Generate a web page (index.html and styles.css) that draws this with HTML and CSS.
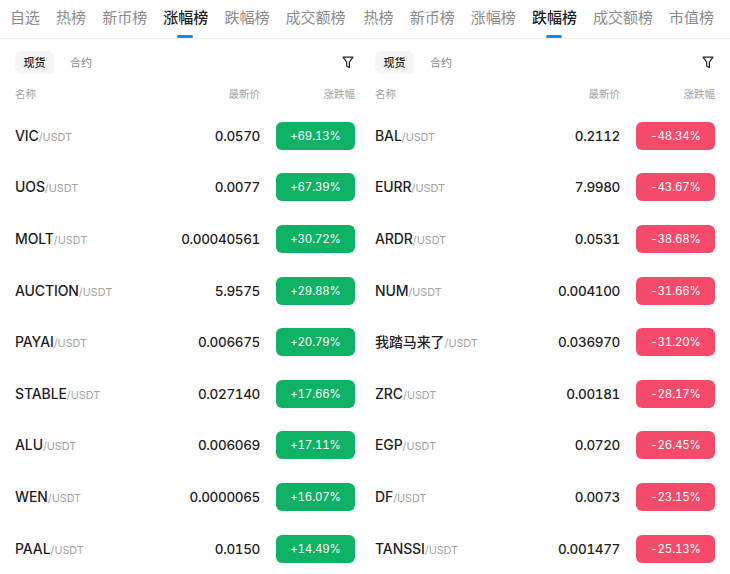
FILE: index.html
```html
<!DOCTYPE html>
<html lang="zh">
<head>
<meta charset="utf-8">
<title>榜单</title>
<link rel="stylesheet" href="styles.css">
</head>
<body>
<nav class="tabs">
  <div class="group"><a class="tab">自选</a><a class="tab">热榜</a><a class="tab">新币榜</a><a class="tab active">涨幅榜</a><a class="tab">跌幅榜</a><a class="tab">成交额榜</a></div>
  <div class="group"><a class="tab">热榜</a><a class="tab">新币榜</a><a class="tab">涨幅榜</a><a class="tab active">跌幅榜</a><a class="tab">成交额榜</a><a class="tab">市值榜</a></div>
</nav>
<main class="panels">
  <section class="panel">
    <div class="toolbar">
      <span class="seg on">现货</span><span class="seg">合约</span>
      <svg class="filter" viewBox="0 0 12 13" width="12" height="13"><path d="M1 1.2h10L7.4 6.2v5.4L4.7 10V6.2z" fill="none" stroke="#222" stroke-width="1.2" stroke-linejoin="round"/></svg>
    </div>
    <div class="row head"><span class="name">名称</span><span class="price">最新价</span><span class="chg">涨跌幅</span></div>
    <div class="row"><span class="name"><b>VIC</b><i>/USDT</i></span><span class="price">0.0570</span><span class="chg up">+69.13%</span></div>
    <div class="row"><span class="name"><b>UOS</b><i>/USDT</i></span><span class="price">0.0077</span><span class="chg up">+67.39%</span></div>
    <div class="row"><span class="name"><b>MOLT</b><i>/USDT</i></span><span class="price">0.00040561</span><span class="chg up">+30.72%</span></div>
    <div class="row"><span class="name"><b>AUCTION</b><i>/USDT</i></span><span class="price">5.9575</span><span class="chg up">+29.88%</span></div>
    <div class="row"><span class="name"><b>PAYAI</b><i>/USDT</i></span><span class="price">0.006675</span><span class="chg up">+20.79%</span></div>
    <div class="row"><span class="name"><b>STABLE</b><i>/USDT</i></span><span class="price">0.027140</span><span class="chg up">+17.66%</span></div>
    <div class="row"><span class="name"><b>ALU</b><i>/USDT</i></span><span class="price">0.006069</span><span class="chg up">+17.11%</span></div>
    <div class="row"><span class="name"><b>WEN</b><i>/USDT</i></span><span class="price">0.0000065</span><span class="chg up">+16.07%</span></div>
    <div class="row"><span class="name"><b>PAAL</b><i>/USDT</i></span><span class="price">0.0150</span><span class="chg up">+14.49%</span></div>
  </section>
  <section class="panel">
    <div class="toolbar">
      <span class="seg on">现货</span><span class="seg">合约</span>
      <svg class="filter" viewBox="0 0 12 13" width="12" height="13"><path d="M1 1.2h10L7.4 6.2v5.4L4.7 10V6.2z" fill="none" stroke="#222" stroke-width="1.2" stroke-linejoin="round"/></svg>
    </div>
    <div class="row head"><span class="name">名称</span><span class="price">最新价</span><span class="chg">涨跌幅</span></div>
    <div class="row"><span class="name"><b>BAL</b><i>/USDT</i></span><span class="price">0.2112</span><span class="chg down">-48.34%</span></div>
    <div class="row"><span class="name"><b>EURR</b><i>/USDT</i></span><span class="price">7.9980</span><span class="chg down">-43.67%</span></div>
    <div class="row"><span class="name"><b>ARDR</b><i>/USDT</i></span><span class="price">0.0531</span><span class="chg down">-38.68%</span></div>
    <div class="row"><span class="name"><b>NUM</b><i>/USDT</i></span><span class="price">0.004100</span><span class="chg down">-31.66%</span></div>
    <div class="row"><span class="name"><b>我踏马来了</b><i>/USDT</i></span><span class="price">0.036970</span><span class="chg down">-31.20%</span></div>
    <div class="row"><span class="name"><b>ZRC</b><i>/USDT</i></span><span class="price">0.00181</span><span class="chg down">-28.17%</span></div>
    <div class="row"><span class="name"><b>EGP</b><i>/USDT</i></span><span class="price">0.0720</span><span class="chg down">-26.45%</span></div>
    <div class="row"><span class="name"><b>DF</b><i>/USDT</i></span><span class="price">0.0073</span><span class="chg down">-23.15%</span></div>
    <div class="row"><span class="name"><b>TANSSI</b><i>/USDT</i></span><span class="price">0.001477</span><span class="chg down">-25.13%</span></div>
  </section>
</main>
</body>
</html>
```
FILE: styles.css
```css
* { box-sizing: border-box; }
html, body { margin: 0; padding: 0; background: #fff; }
body {
  width: 730px;
  height: 574px;
  overflow: hidden;
  font-family: Inter, "Noto Sans CJK SC", sans-serif;
  font-variant-numeric: tabular-nums;
  color: #1f1f1f;
}
.tabs {
  display: flex;
  gap: 18px;
  height: 39px;
  padding-left: 10px;
  border-bottom: 1px solid #f2f2f2;
  white-space: nowrap;
}
.group {
  display: flex;
  gap: 16.1px;
}
.tab {
  position: relative;
  font-size: 15px;
  line-height: 36px;
  color: #8c8c8c;
}
.tab.active { color: #1f1f1f; font-weight: 500; }
.tab.active::after {
  content: "";
  position: absolute;
  left: 50%;
  bottom: 0;
  width: 16px;
  height: 3px;
  margin-left: -8.5px;
  border-radius: 2px;
  background: #1a84f2;
}
.panels {
  display: grid;
  grid-template-columns: 340px 340px;
  gap: 20px;
  padding: 12px 15px 0;
}
.toolbar {
  display: flex;
  align-items: center;
  height: 23px;
}
.seg {
  padding: 1px 8px 0;
  margin-right: 8px;
  font-size: 11px;
  line-height: 22px;
  border-radius: 6px;
  color: #8c8c8c;
}
.seg.on { padding: 1px 8.5px 0; background: #f5f5f5; color: #1f1f1f; font-weight: 500; }
.filter { margin-left: auto; margin-right: 1px; }
.row {
  display: flex;
  align-items: center;
  height: 51.6px;
}
.row.head { height: 22px; margin-top: 8px; margin-bottom: 6px; font-size: 10.5px; color: #a3a3a3; }
.row .name { flex: 1; padding-bottom: 2px; }
.row.head .name { padding-bottom: 0; }
.name b { font-size: 14px; font-weight: 500; letter-spacing: -0.1px; color: #1f1f1f; }
.name i { font-style: normal; font-size: 10.8px; color: #a3a3a3; }
.price { font-size: 13.5px; font-weight: 500; letter-spacing: -0.35px; text-align: right; }
.head .price { font-size: 10.5px; font-weight: 400; letter-spacing: 0; }
.chg {
  width: 79px;
  margin-left: 16px;
  text-align: right;
}
.up, .down {
  height: 28px;
  border-radius: 6px;
  color: #fff;
  font-size: 11.5px;
  letter-spacing: -0.2px;
  line-height: 28px;
  text-align: center;
}
.up { background: #0eb264; }
.down { background: #f44b6b; }
```
